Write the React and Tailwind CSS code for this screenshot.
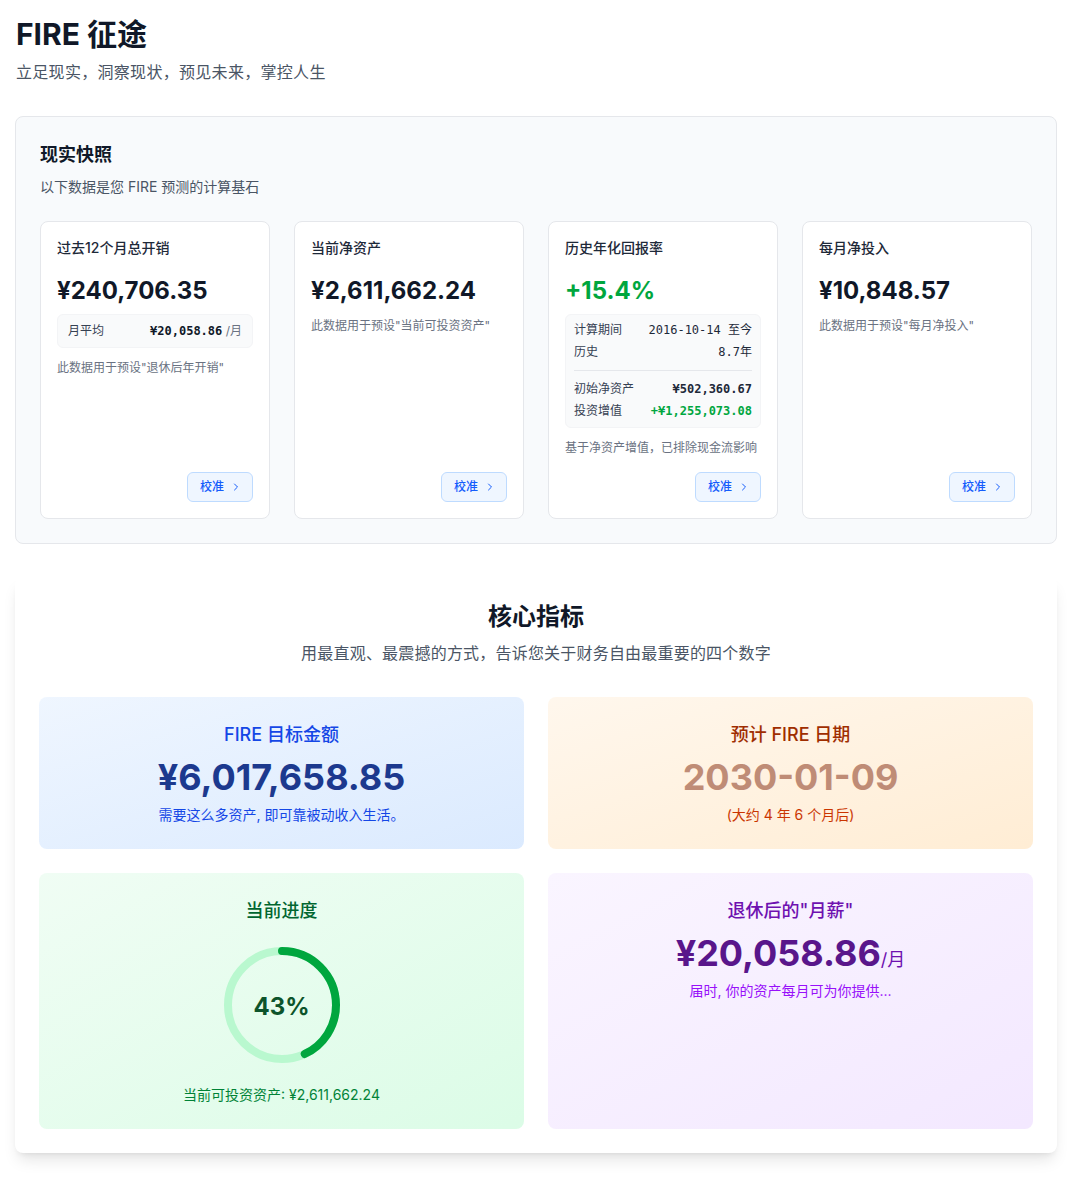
import React from "react";
import { ChevronRight } from "lucide-react";

const SANS = { fontFamily: 'Inter, "Noto Sans CJK SC", sans-serif' };
const MONO = { fontFamily: '"DejaVu Sans Mono", "Noto Sans CJK SC", monospace' };

function CalibrateButton() {
  return (
    <div className="mt-auto flex justify-end pt-4">
      <button className="flex h-[30px] items-center gap-1.5 rounded-md border border-blue-200 bg-blue-50 pr-2.5 pl-3 text-xs font-medium leading-4 text-blue-600">
        校准
        <ChevronRight size={12} strokeWidth={2} />
      </button>
    </div>
  );
}

function SnapCard({ title, children }) {
  return (
    <div className="flex h-[298px] flex-col rounded-lg border border-gray-200 bg-white p-4">
      <div className="text-sm font-medium leading-5 text-gray-800">{title}</div>
      {children}
      <CalibrateButton />
    </div>
  );
}

function Ring({ pct }) {
  const r = 54;
  const c = 2 * Math.PI * r;
  return (
    <svg width="128" height="128" viewBox="0 0 128 128" className="-rotate-90">
      <circle cx="64" cy="64" r={r} fill="none" className="stroke-green-200" strokeWidth="8" />
      <circle
        cx="64"
        cy="64"
        r={r}
        fill="none"
        className="stroke-green-600"
        strokeWidth="8"
        strokeLinecap="round"
        strokeDasharray={`${c * pct} ${c}`}
      />
    </svg>
  );
}

export default function App() {
  return (
    <div className="min-h-[1180px] bg-white pt-4 pr-[14px] pb-7 pl-[15px] text-gray-900" style={SANS}>
      <h1 className="pl-px text-3xl font-bold leading-9 text-gray-900">FIRE 征途</h1>
      <p className="mt-2 pl-px text-base leading-6 tracking-[0.3px] text-gray-600">立足现实，洞察现状，预见未来，掌控人生</p>

      {/* Reality snapshot */}
      <section className="mt-8 rounded-lg border border-gray-200 bg-[#f8fafc] p-6">
        <h2 className="text-lg font-semibold leading-7 text-gray-900">现实快照</h2>
        <p className="mt-2 text-sm leading-5 text-gray-600">以下数据是您 FIRE 预测的计算基石</p>

        <div className="mt-6 grid grid-cols-4 gap-6">
          <SnapCard title="过去12个月总开销">
            <div className="mt-[17px] text-2xl font-bold leading-8 text-gray-900">¥240,706.35</div>
            <div className="mt-[7px] flex items-center justify-between rounded-md border border-gray-100 bg-gray-50 px-2.5 py-2 text-xs leading-4">
              <span className="text-gray-700">月平均</span>
              <span>
                <span className="font-bold text-gray-900" style={MONO}>¥20,058.86</span>
                <span className="text-gray-500"> /月</span>
              </span>
            </div>
            <p className="mt-3 text-xs leading-4 text-gray-500">此数据用于预设"退休后年开销"</p>
          </SnapCard>

          <SnapCard title="当前净资产">
            <div className="mt-[17px] text-2xl font-bold leading-8 text-gray-900">¥2,611,662.24</div>
            <p className="mt-[11px] text-xs leading-4 text-gray-500">此数据用于预设"当前可投资资产"</p>
          </SnapCard>

          <SnapCard title="历史年化回报率">
            <div className="mt-[17px] text-2xl font-bold leading-8 text-green-600">+15.4%</div>
            <div className="mt-[7px] rounded-md border border-gray-100 bg-gray-50 px-2 pt-[7px] pb-2 text-xs leading-4">
              <div className="space-y-1.5">
                <div className="flex justify-between">
                  <span className="text-gray-700">计算期间</span>
                  <span className="text-gray-800" style={MONO}>2016-10-14 至今</span>
                </div>
                <div className="flex justify-between">
                  <span className="text-gray-700">历史</span>
                  <span className="text-gray-800" style={MONO}>8.7年</span>
                </div>
              </div>
              <div className="mt-2.5 space-y-1.5 border-t border-gray-200 pt-2.5">
                <div className="flex justify-between">
                  <span className="text-gray-700">初始净资产</span>
                  <span className="font-bold text-gray-800" style={MONO}>¥502,360.67</span>
                </div>
                <div className="flex justify-between">
                  <span className="text-gray-700">投资增值</span>
                  <span className="font-bold text-green-600" style={MONO}>+¥1,255,073.08</span>
                </div>
              </div>
            </div>
            <p className="mt-3 text-xs leading-4 text-gray-500">基于净资产增值，已排除现金流影响</p>
          </SnapCard>

          <SnapCard title="每月净投入">
            <div className="mt-[17px] text-2xl font-bold leading-8 text-gray-900">¥10,848.57</div>
            <p className="mt-[11px] text-xs leading-4 text-gray-500">此数据用于预设"每月净投入"</p>
          </SnapCard>
        </div>
      </section>

      {/* Core metrics */}
      <section className="mt-[33px] rounded-lg bg-white p-6 shadow-lg">
        <h2 className="text-center text-2xl font-bold leading-8 text-gray-900">核心指标</h2>
        <p className="mt-2 text-center text-base leading-6 tracking-[0.2px] text-gray-600">
          用最直观、最震撼的方式，告诉您关于财务自由最重要的四个数字
        </p>

        <div className="mt-8 grid grid-cols-2 gap-6">
          <div className="rounded-lg bg-linear-to-br from-blue-50 to-blue-100 p-6 text-center">
            <div className="text-lg font-medium leading-7 text-blue-700">FIRE 目标金额</div>
            <div className="mt-2 text-4xl font-bold leading-10 text-blue-900">¥6,017,658.85</div>
            <div className="mt-2 text-sm leading-5 text-blue-700">需要这么多资产, 即可靠被动收入生活。</div>
          </div>

          <div className="rounded-lg bg-linear-to-br from-orange-50 to-orange-100 p-6 text-center">
            <div className="text-lg font-medium leading-7 text-orange-800">预计 FIRE 日期</div>
            <div className="mt-2 text-4xl font-bold leading-10 text-[#bf8c76]">2030-01-09</div>
            <div className="mt-2 text-sm leading-5 text-orange-700">(大约 4 年 6 个月后)</div>
          </div>

          <div className="flex flex-col items-center rounded-lg bg-linear-to-br from-green-50 to-green-100 p-6 text-center">
            <div className="text-lg font-medium leading-7 text-green-800">当前进度</div>
            <div className="relative mt-4 h-32 w-32">
              <Ring pct={0.43} />
              <div className="absolute inset-0 flex items-center justify-center pt-1 text-2xl font-bold text-green-900">
                43%
              </div>
            </div>
            <div className="mt-4 text-sm leading-5 text-green-700">当前可投资资产: ¥2,611,662.24</div>
          </div>

          <div className="rounded-lg bg-linear-to-br from-purple-50 to-purple-100 p-6 text-center">
            <div className="text-lg font-medium leading-7 text-purple-800">退休后的"月薪"</div>
            <div className="mt-2 flex h-10 items-baseline justify-center leading-10">
              <span className="text-4xl font-bold leading-10 text-purple-900">¥20,058.86</span>
              <span className="text-lg leading-7 text-purple-800">/月</span>
            </div>
            <div className="mt-2 text-sm leading-5 text-purple-600">届时, 你的资产每月可为你提供...</div>
          </div>
        </div>
      </section>
    </div>
  );
}
